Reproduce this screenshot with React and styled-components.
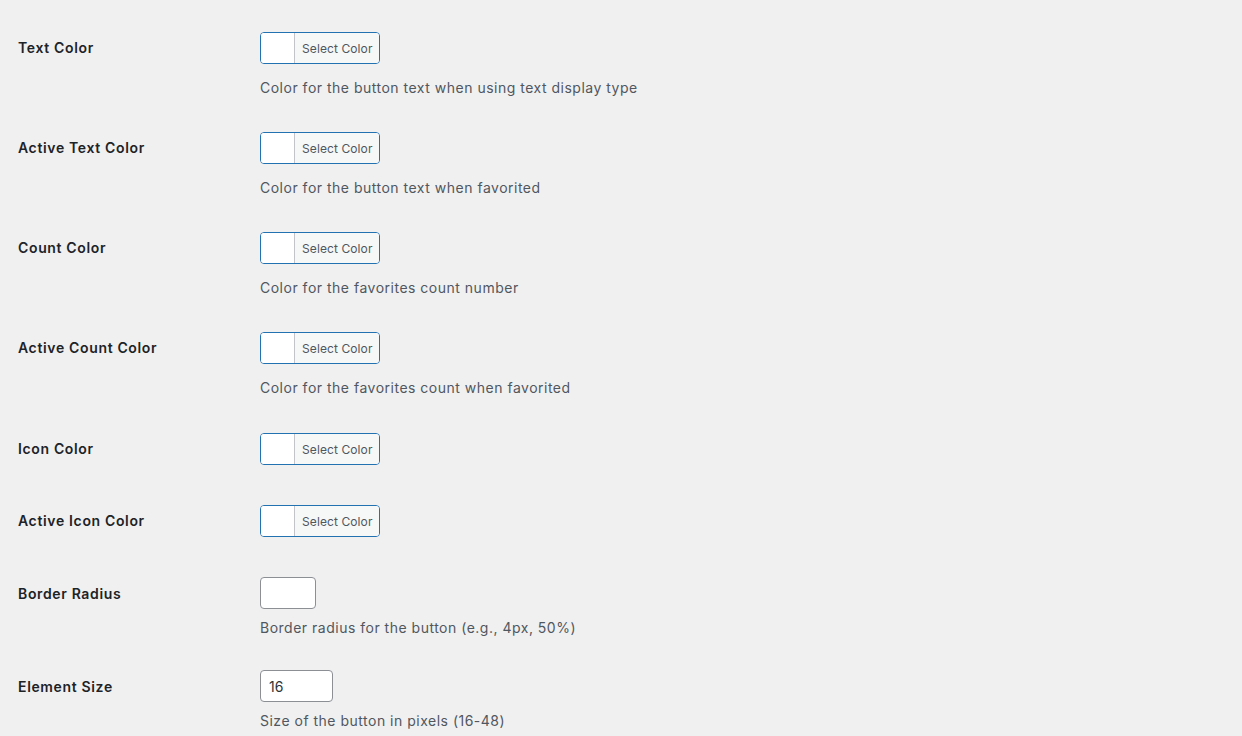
import styled, { createGlobalStyle } from "styled-components";

//------------------------------------------------------------------->

const GlobalStyle = createGlobalStyle`
  html, body {
    margin: 0;
    padding: 0;
    background: #f0f0f1;
  }
  body {
    font-family: Inter, "Liberation Sans", Arial, sans-serif;
    font-size: 14px;
    color: #3c434a;
  }
`;

const FormTable = styled.div`
  display: flex;
  flex-direction: column;
  padding: 18px 0 0 18px;
`;

const Row = styled.div`
  display: grid;
  grid-template-columns: 242px 1fr;
  padding-bottom: ${({ $pb }) => $pb ?? 21}px;
`;

const Label = styled.div`
  padding-top: 21px;
  font-size: 14px;
  line-height: 18px;
  font-weight: 600;
  letter-spacing: 0.65px;
  color: #1d2327;
`;

const Field = styled.div`
  padding-top: ${({ $compact }) => ($compact ? "13px" : "14px")};
  display: flex;
  flex-direction: column;
  align-items: flex-start;
`;

const PickerButton = styled.button`
  display: flex;
  align-items: stretch;
  height: 32px;
  padding: 0;
  margin: 0 0 4px;
  border: 1px solid #2271b1;
  border-radius: 4px;
  background: #fff;
  overflow: hidden;
  cursor: pointer;
  font-family: inherit;
`;

const Swatch = styled.span`
  width: 33px;
  background: ${({ $color }) => $color || "#fff"};
`;

const PickerText = styled.span`
  display: flex;
  align-items: center;
  padding: 0 6px 0 7px;
  border-left: 1px solid #c3c4c7;
  background: #f6f7f7;
  color: #50575e;
  font-size: 12px;
  letter-spacing: 0.1px;
`;

const TextInput = styled.input`
  box-sizing: border-box;
  width: ${({ $width }) => $width}px;
  height: 32px;
  margin: 0;
  padding: 0 8px;
  border: 1px solid #8c8f94;
  border-radius: 4px;
  background: #fff;
  color: #2c3338;
  font-family: inherit;
  font-size: 14px;
  outline: none;
`;

const Description = styled.p`
  margin: ${({ $compact }) => ($compact ? "10px" : "11px")} 0 0;
  font-size: 14px;
  line-height: 18px;
  letter-spacing: 0.5px;
  color: #50575e;
`;

//------------------------------------------------------------------->

const colorFields = [
  { label: "Text Color", desc: "Color for the button text when using text display type" },
  { label: "Active Text Color", desc: "Color for the button text when favorited" },
  { label: "Count Color", desc: "Color for the favorites count number" },
  { label: "Active Count Color", desc: "Color for the favorites count when favorited", pb: 22 },
  { label: "Icon Color", pb: 22 },
  { label: "Active Icon Color", pb: 23 },
];

const inputFields = [
  { label: "Border Radius", value: "", width: 56, desc: "Border radius for the button (e.g., 4px, 50%)" },
  { label: "Element Size", value: "16", width: 73, desc: "Size of the button in pixels (16-48)" },
];

function App() {
  return (
    <>
      <GlobalStyle />
      <FormTable>
        {colorFields.map((f) => (
          <Row key={f.label} $pb={f.pb}>
            <Label>{f.label}</Label>
            <Field>
              <PickerButton type="button">
                <Swatch />
                <PickerText>Select Color</PickerText>
              </PickerButton>
              {f.desc && <Description>{f.desc}</Description>}
            </Field>
          </Row>
        ))}
        {inputFields.map((f) => (
          <Row key={f.label} $pb={20}>
            <Label>{f.label}</Label>
            <Field $compact>
              <TextInput type="text" defaultValue={f.value} $width={f.width} />
              <Description $compact>{f.desc}</Description>
            </Field>
          </Row>
        ))}
      </FormTable>
    </>
  );
}

export default App;
